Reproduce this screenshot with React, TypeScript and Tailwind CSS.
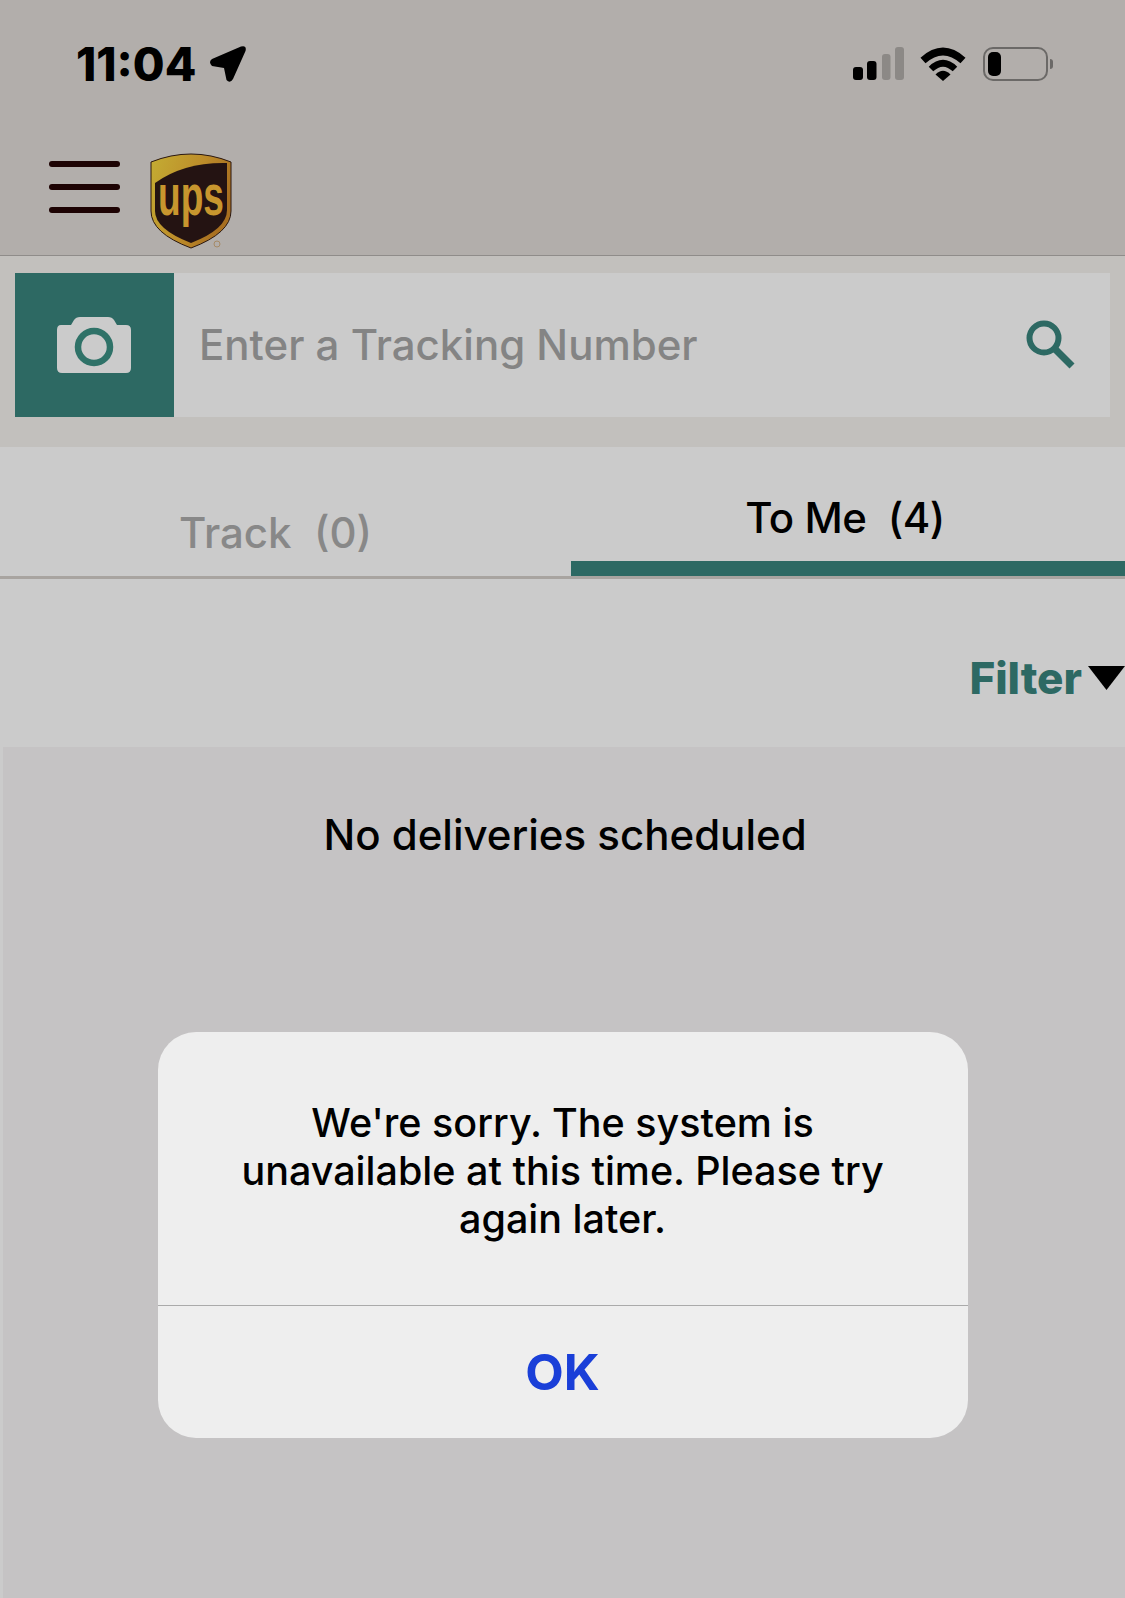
const FONT = "font-['Inter','Liberation_Sans',sans-serif]";

function StatusIcons() {
  return (
    <div className="flex items-center">
      {/*//! Signal */}
      <svg width="52" height="34" viewBox="0 0 52 34" className="mr-[15px]">
        <rect x="0" y="20" width="10" height="13" rx="3" fill="#000" />
        <rect x="14" y="14" width="9.5" height="19" rx="3" fill="#000" />
        <rect x="29" y="7" width="8.5" height="26" rx="3" fill="#8c8986" />
        <rect x="42" y="0" width="9" height="33" rx="3" fill="#8c8986" />
      </svg>
      {/*//! Wifi */}
      <svg width="46" height="34" viewBox="0 0 46 34" className="mr-[17px]">
        <path d="M3 13.5 Q23 -4.5 43 13.5" fill="none" stroke="#000" strokeWidth="7.5" />
        <path d="M11 22 Q23 10.5 35 22" fill="none" stroke="#000" strokeWidth="6.5" />
        <path d="M15.5 27.5 Q23 20 30.5 27.5 L23 34 Z" fill="#000" />
      </svg>
      {/*//! Battery */}
      <div className="w-[65px] h-[34px] rounded-[10px] border-[2.5px] border-[#6b6967] p-[3px] flex">
        <div className="w-[13px] h-full rounded-[5px] bg-black" />
      </div>
      <div className="w-[3px] h-[10px] ml-[2px] rounded-r-[3px] bg-[#6b6967]" />
    </div>
  );
}

function UpsLogo() {
  return (
    <svg width="84" height="98" viewBox="0 0 84 98">
      <defs>
        <linearGradient id="gold" x1="0" y1="0" x2="1" y2="0.4">
          <stop offset="0" stopColor="#c4ad33" />
          <stop offset="0.6" stopColor="#bd8c2a" />
          <stop offset="1" stopColor="#a86f20" />
        </linearGradient>
      </defs>
      <path d="M1 9 Q41 -7 81 9 V58 Q81 80 41 95 Q1 80 1 58 Z" fill="url(#gold)" stroke="#2a1710" strokeWidth="1" />
      <path d="M5 30 Q34 9 77 10 V57 Q77 76 41 90 Q5 76 5 58 Z" fill="#241312" />
      <text
        transform="translate(41 62) scale(0.64 1)"
        textAnchor="middle"
        fontFamily="'Liberation Sans', sans-serif"
        fontWeight="700"
        fontSize="58"
        fill="#c8962e"
      >
        ups
      </text>
      <circle cx="67" cy="91" r="3" fill="none" stroke="#a68a66" strokeWidth="1" />
    </svg>
  );
}

export default function App() {
  return (
    <div className={`${FONT} relative w-[1125px] h-[1598px] overflow-hidden flex flex-col bg-[#cbcbcb]`}>
      {/*//! Header */}
      <div className="h-[256px] shrink-0 bg-[#b2aeab] border-b border-[#8f8c8a] flex flex-col">
        <div className="flex items-center justify-between pt-[46px] pl-[76px] pr-[72px]">
          <div className="flex items-center h-[36px]">
            <span className="text-[46px] leading-none font-extrabold text-black">11:04</span>
            <svg width="38" height="38" viewBox="0 0 38 38" className="ml-[13px]">
              <path
                d="M3 14 L32 1.5 Q38 0 36.5 6 L24 34 Q21 39 17.5 35 L15 23 L3 21 Q-1 17 3 14 Z"
                fill="#000"
              />
            </svg>
          </div>
          <StatusIcons />
        </div>
        <div className="flex items-start pt-[71px] pl-[49px]">
          <div className="flex flex-col gap-[17px] pt-[8px]">
            <div className="w-[71px] h-[6px] rounded-full bg-[#1d0303]" />
            <div className="w-[71px] h-[6px] rounded-full bg-[#1d0303]" />
            <div className="w-[71px] h-[6px] rounded-full bg-[#1d0303]" />
          </div>
          <div className="ml-[30px]">
            <UpsLogo />
          </div>
        </div>
      </div>

      {/*//! Search */}
      <div className="h-[191px] shrink-0 bg-[#c2c0bd] pt-[17px] pl-[15px] pr-[15px]">
        <div className="h-[144px] flex bg-[#cbcbcb]">
          <div className="w-[159px] bg-[#2d6963] flex items-center justify-center">
            <svg width="76" height="58" viewBox="0 0 76 58" className="mr-[2px]">
              <path
                d="M5 9 H15 L18 4 Q20 1 24 1 H52 Q56 1 58 4 L61 9 H70 Q75 9 75 14 V52 Q75 57 70 57 H6 Q1 57 1 52 V14 Q1 9 5 9 Z"
                fill="#cbcbcb"
              />
              <circle cx="38" cy="31" r="16" fill="none" stroke="#2f7268" strokeWidth="6.5" />
            </svg>
          </div>
          <div className="flex-1 flex items-center justify-between pl-[25px] pr-[34px]">
            <span className="text-[42px] font-medium text-[#848484] pb-[2px]">Enter a Tracking Number</span>
            <svg width="50" height="50" viewBox="0 0 50 50">
              <circle cx="18" cy="18" r="14.5" fill="none" stroke="#2d6963" strokeWidth="6" />
              <path d="M28 28 L46 46" fill="none" stroke="#2d6963" strokeWidth="7" />
            </svg>
          </div>
        </div>
      </div>

      {/*//! Tabs */}
      <div className="h-[132px] shrink-0 flex border-b-[3px] border-[#a8a4a0]">
        <div className="w-[571px] flex items-end justify-center pb-[13px] pr-[20px]">
          <span className="text-[42px] font-medium text-[#888888] whitespace-pre leading-[60px]">Track  (0)</span>
        </div>
        <div className="flex-1 flex flex-col items-center justify-end border-b-[15px] border-[#2d6963]">
          <span className="text-[42px] font-medium text-black whitespace-pre leading-[60px] pb-[13px] pr-[6px] tracking-[-0.5px]">To Me  (4)</span>
        </div>
      </div>

      {/*//! Filter */}
      <div className="h-[168px] shrink-0 flex items-center justify-end pt-[30px]">
        <div className="flex items-start">
          <span className="text-[44px] font-extrabold text-[#2d6963] leading-[50px]">Filter</span>
          <svg width="37" height="24" viewBox="0 0 37 24" className="ml-[6px] mt-[13px]">
            <path d="M0 0 H37 L18.5 24 Z" fill="#000" />
          </svg>
        </div>
      </div>

      {/*//! Deliveries */}
      <div className="flex-1 ml-[3px] bg-[#c5c3c4] pt-[59px] pl-[2px] flex justify-center items-start">
        <span className="text-[42px] font-medium text-black leading-[58px]">No deliveries scheduled</span>
      </div>

      {/*//! Alert */}
      <div className="absolute inset-0 flex justify-center items-start pt-[1032px]">
        <div className="w-[810px] h-[406px] rounded-[38px] bg-[#eeeeee] flex flex-col">
          <div className="h-[274px] shrink-0 border-b border-[#aaaaaa] pt-[67px] px-[50px] text-center text-[39.5px] font-[450] leading-[48px] text-black">
            We're sorry. The system is
            <br />
            unavailable at this time. Please try
            <br />
            again later.
          </div>
          <div className="flex-1 flex items-center justify-center">
            <span className="text-[50px] font-bold text-[#1a3fd8] leading-none">OK</span>
          </div>
        </div>
      </div>
    </div>
  );
}
